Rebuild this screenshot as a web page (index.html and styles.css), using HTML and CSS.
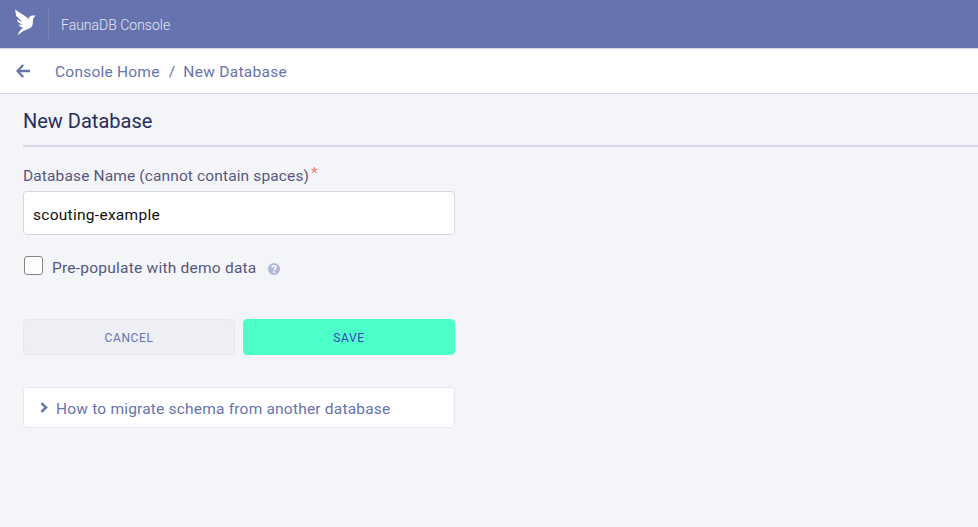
FILE: index.html
```html
<!DOCTYPE html>
<html lang="en">
<head>
<meta charset="utf-8">
<title>FaunaDB Console</title>
<link rel="stylesheet" href="styles.css">
</head>
<body>
<header class="topbar">
  <svg class="logo" width="22" height="28" viewBox="0 0 22 28"><path fill="#fff" d="M0 0.5 11.8 8.2C12.8 8.9 13 9.5 13.3 10.5C14.1 7.6 15.4 6.7 17.3 6.4L20.7 6.5 18.4 8.9C17.8 10.3 18 12.5 17.7 15.3C17.2 18 15.5 19.4 12.4 20.2L7.5 22.6 2.8 26.3C3.6 23.3 5.6 20.5 8.1 18.8L4.9 17.6 3.6 15.5 7.6 16 2.9 13 2 10.3 7.8 13.3 1.3 7.1Z"/></svg>
  <span class="product">FaunaDB Console</span>
</header>
<nav class="crumbs">
  <svg class="back" width="14" height="14" viewBox="0 0 14 14" fill="none" stroke="#6673ae" stroke-width="2.3"><path d="M7.2 1 1.5 7l5.7 6M1.5 7H14"/></svg>
  <a class="crumb">Console Home</a><span class="crumb slash">/</span><a class="crumb">New Database</a>
</nav>
<main class="content">
  <h1 class="title">New Database</h1>
  <form class="form">
    <label class="label" for="name"><span class="label-text">Database Name (cannot contain spaces)</span><span class="required">*</span></label>
    <input class="input" id="name" type="text" value="scouting-example">
    <div class="check-row">
      <span class="checkbox"></span>
      <span class="check-label">Pre-populate with demo data</span>
      <svg class="help" width="12" height="12" viewBox="0 0 12 12"><circle cx="6" cy="6" r="6" fill="#b0b6d9"/><path d="M4 4.6C4.1 2.3 8 2.4 8 4.6 8 5.9 6.1 5.8 6.1 7.2" fill="none" stroke="#fff" stroke-width="1.6"/><path fill="#fff" d="M5.2 8.2h1.7v1.7H5.2z"/></svg>
    </div>
    <div class="actions">
      <button type="button" class="button cancel">CANCEL</button>
      <button type="button" class="button save">SAVE</button>
    </div>
    <div class="disclosure">
      <svg class="chevron" width="8" height="11" viewBox="0 0 8 11" fill="none" stroke="#6673ae" stroke-width="2.5"><path d="m1.4 1.2 4.6 4.3-4.6 4.3"/></svg>
      <span class="disclosure-text">How to migrate schema from another database</span>
    </div>
  </form>
</main>
</body>
</html>
```
FILE: styles.css
```css
* { box-sizing: border-box; }
body {
  margin: 0;
  min-height: 527px;
  overflow: hidden;
  background: #f4f5f9;
  color: #6673ae;
  font: 15.5px/20px Roboto, "Liberation Sans", sans-serif;
  letter-spacing: .23px;
  white-space: nowrap;
}
.topbar {
  display: flex;
  align-items: center;
  height: 48px;
  padding-left: 15px;
  background: #6673ae;
}
.logo { margin-top: -2px; }
.product {
  height: 32px;
  margin: -1px 0 0 11px;
  padding-left: 12px;
  border-left: 1px solid #7985b9;
  color: #e4e7f3;
  font-size: 14px;
  font-weight: 300;
  line-height: 34px;
  letter-spacing: 0;
}
.crumbs {
  display: flex;
  align-items: center;
  height: 46px;
  padding-left: 16px;
  background: #fff;
  border-top: 1px solid #d6d6e4;
  border-bottom: 1px solid #d6d6e7;
}
.back { margin-right: 25px; }
.crumb { margin-top: 2px; }
.slash { margin-left: 9px; margin-right: 8px; }
.crumb:last-child { letter-spacing: .3px; }
.content { padding: 13px 0 0 23px; }
.title {
  margin: 0;
  height: 40px;
  border-bottom: 2px solid #d6d6e7;
  color: #282c5e;
  font-size: 20px;
  font-weight: 400;
  line-height: 28px;
  letter-spacing: 0;
}
.form { width: 432px; }
.label {
  display: flex;
  height: 44px;
  padding-top: 19px;
  color: #57577e;
  letter-spacing: .13px;
}
.required { margin: -3px 0 0 2px; color: #ff7b7b; }
.input {
  display: block;
  width: 100%;
  height: 44px;
  padding: 3px 9px 0;
  border: 1px solid #d6d6e7;
  border-radius: 4px;
  outline: 0;
  background: #fff;
  color: #111;
  font: inherit;
  letter-spacing: .28px;
}
.check-row {
  display: flex;
  align-items: center;
  height: 20px;
  margin-top: 21px;
  color: #57577e;
}
.checkbox {
  width: 19px;
  height: 19px;
  margin: -1px 9px 0 1px;
  border: 1px solid #858585;
  border-radius: 3px;
  background: #fcfffd;
}
.check-label { margin-top: 3px; }
.help { margin: 5px 0 0 11px; }
.actions {
  display: flex;
  gap: 8px;
  margin-top: 43px;
}
.button {
  width: 212px;
  height: 36px;
  padding: 2px 0 0;
  border: 1px solid #e7e8ed;
  border-radius: 4px;
  font: 12px/18px Roboto, "Liberation Sans", sans-serif;
  letter-spacing: .6px;
}
.cancel { background: #edeff4; color: #6673ae; }
.save { border-color: #4cffc9; background: #4cffc9; color: #3f3fbd; }
.disclosure {
  display: flex;
  align-items: center;
  height: 41px;
  margin-top: 32px;
  padding-left: 16px;
  border: 1px solid #e7e8ed;
  border-radius: 4px;
  background: #fff;
}
.disclosure-text { margin: 2px 0 0 8px; letter-spacing: .2px; }
```
